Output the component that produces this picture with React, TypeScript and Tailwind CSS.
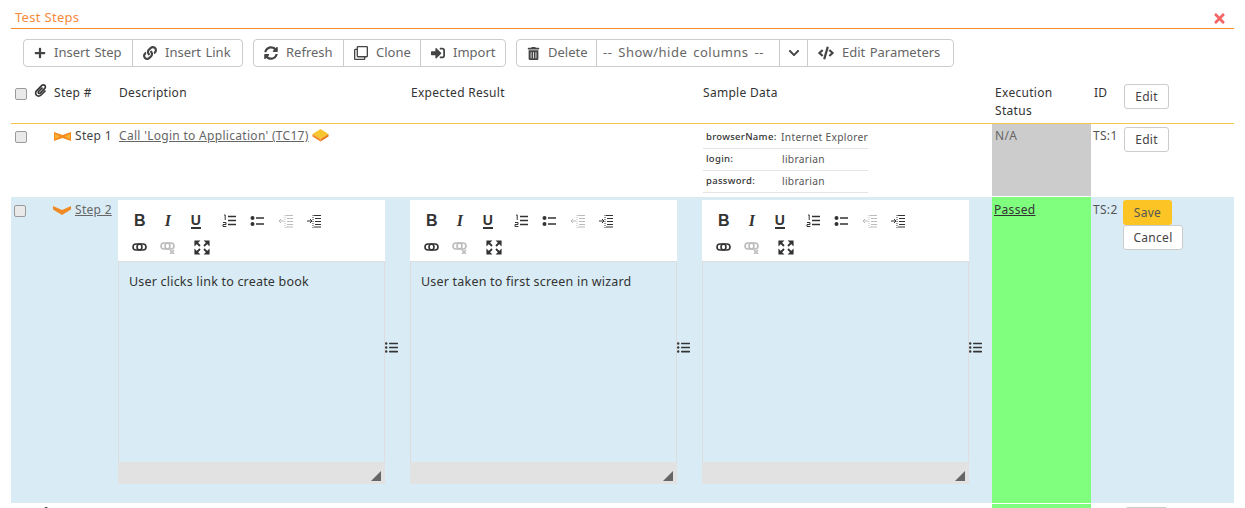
import React from "react";
import {
  FaPlus, FaLink, FaSyncAlt, FaRegClone, FaSignInAlt, FaTrashAlt, FaChevronDown, FaCode, FaPaperclip, FaListUl, FaTimes,
} from "react-icons/fa";

const font = "font-['Noto_Sans','Open_Sans',sans-serif]";

function Btn({ w, icon, label, text = "[word-spacing:1px]", center = false }: { w: string; icon?: React.ReactNode; label?: string; text?: string; center?: boolean }) {
  return (
    <div className={`${w} flex h-full items-center gap-[8px] whitespace-nowrap border-r border-[#ccc] last:border-r-0 text-[13px] text-[#666] ${center ? "justify-center" : "pl-[10px]"}`}>
      {icon}
      {label && <span className={text}>{label}</span>}
    </div>
  );
}

function Group({ children }: { children: React.ReactNode }) {
  return <div className="flex h-[28px] rounded-[4px] border border-[#ccc] bg-white">{children}</div>;
}

function Check() {
  return <div className="h-[12px] w-[12px] rounded-[2px] border border-[#9a9a9a] bg-[#e9e9e9]" />;
}

function PlainBtn({ label, w }: { label: string; w: string }) {
  return (
    <div className={`${w} flex h-[25px] items-center justify-center rounded-[3px] border border-[#ccc] bg-white text-[12px] tracking-[0.3px] text-[#444]`}>
      {label}
    </div>
  );
}

const Ic = ({ children, w = 16, h = 14 }: { children: React.ReactNode; w?: number; h?: number }) => (
  <svg width={w} height={h} viewBox={`0 0 ${w} ${h}`} className="block">{children}</svg>
);

function EditorToolbar() {
  const d = "#333";
  const l = "#bbb";
  const indent = (c: string, out: boolean) => (
    <Ic>
      <g stroke={c} strokeWidth="1" fill="none">
        <path d="M8 1.5H15M9 4.5H15M9 7.5H15M9 10.5H15M8 13H15" />
        <path d="M7 1V14" strokeDasharray="1 1" />
        {out ? <path d="M6 7H1M3 5L1 7L3 9" /> : <path d="M1 7H6M4 5L6 7L4 9" />}
      </g>
    </Ic>
  );
  const Cell = ({ children }: { children: React.ReactNode }) => (
    <div className="flex h-[26px] w-[28px] items-center justify-center">{children}</div>
  );
  return (
    <div className="h-[61px] bg-white pl-[8px] pt-[8px]">
      <div className="flex">
        <Cell>
          <span className="font-['Liberation_Sans',sans-serif] text-[16px] font-bold leading-none text-[#333]">B</span>
        </Cell>
        <Cell>
          <span className="font-['Liberation_Serif',serif] text-[16px] font-bold italic leading-none text-[#333]">I</span>
        </Cell>
        <Cell>
          <span className="border-b-2 border-[#333] font-['Liberation_Sans',sans-serif] text-[14px] font-bold leading-[13px] text-[#333]">U</span>
        </Cell>
        <div className="w-[6px]" />
        <Cell>
          <Ic>
            <path d="M6 2.5H14M6 6.5H14M6 10.5H14" stroke={d} strokeWidth="1.5" />
            <path d="M2 1H3.2V6" stroke={d} strokeWidth="1" fill="none" />
            <path d="M1 8.5H4V10.5H1V12.5H4.4" stroke={d} strokeWidth="1" fill="none" />
          </Ic>
        </Cell>
        <Cell>
          <Ic>
            <path d="M6 4H14M6 10H14" stroke={d} strokeWidth="1.6" />
            <circle cx="2.5" cy="4" r="2" fill={d} />
            <circle cx="2.5" cy="10" r="2" fill={d} />
          </Ic>
        </Cell>
        <Cell>{indent(l, true)}</Cell>
        <Cell>{indent(d, false)}</Cell>
      </div>
      <div className="flex">
        <Cell>
          <Ic>
            <g fill="none" stroke={d} strokeWidth="1.6">
              <rect x="1" y="4" width="9" height="6" rx="3" />
              <rect x="5" y="4" width="9" height="6" rx="3" />
            </g>
          </Ic>
        </Cell>
        <Cell>
          <Ic>
            <g fill="none" stroke={l} strokeWidth="1.6">
              <rect x="1" y="3" width="9" height="6" rx="3" />
              <rect x="5" y="3" width="9" height="6" rx="3" />
              <path d="M10 10L14 14M14 10L10 14" />
            </g>
          </Ic>
        </Cell>
        <div className="w-[6px]" />
        <Cell>
          <Ic h={15}>
            <g fill={d} stroke={d} strokeWidth="1.2">
              <path d="M1 1H5L1 5Z" />
              <path d="M15 1H11L15 5Z" />
              <path d="M1 14H5L1 10Z" />
              <path d="M15 14H11L15 10Z" />
              <path d="M3 3L6 6M13 3L10 6M3 12L6 9M13 12L10 9" fill="none" strokeWidth="1.8" />
            </g>
          </Ic>
        </Cell>
      </div>
    </div>
  );
}

function Editor({ text }: { text?: string }) {
  return (
    <div className="flex">
      <div className="mt-[3px] flex h-[284px] w-[267px] flex-col">
        <EditorToolbar />
        <div className="h-[201px] border-x border-t border-[#ddd] px-[10px] py-[11px] text-[12.5px] leading-[18px] tracking-[0.2px] text-[#333]">
          {text}
        </div>
        <div className="flex h-[22px] items-end justify-end bg-[#e2e2e2] pb-[3px] pr-[4px]">
          <div className="h-[10px] w-[10px] bg-[#666] [clip-path:polygon(100%_0,100%_100%,0_100%)]" />
        </div>
      </div>
      <div className="flex h-[300px] items-center text-[#333]">
        <FaListUl size={13} />
      </div>
    </div>
  );
}

const BowTie = () => (
  <svg width="17" height="9" viewBox="0 0 17 9" className="block">
    <path d="M0 0L8.5 3L17 0V9L8.5 6L0 9Z" fill="#f28c1e" />
    <path d="M1 2L6 4.5L1 7Z" fill="#f9b233" />
    <path d="M16 2L11 4.5L16 7Z" fill="#f9b233" />
  </svg>
);

const Chevron = () => (
  <svg width="18" height="9" viewBox="0 0 18 9" className="block">
    <path d="M0 0L9 4L18 0V3.5L9 9L0 3.5Z" fill="#f08a24" />
  </svg>
);

const Block = () => (
  <svg width="17" height="14" viewBox="0 0 17 14" className="mt-[1px] block">
    <path d="M8.5 1L16.5 6L8.5 11L0.5 6Z" fill="#f7c52d" />
    <path d="M0.5 6V8.5L8.5 13.5V11Z" fill="#f08a24" />
    <path d="M16.5 6V8.5L8.5 13.5V11Z" fill="#e9791a" />
  </svg>
);

function Param({ k, v }: { k: string; v: string }) {
  return (
    <div className="flex h-[22px] items-center whitespace-nowrap border-b border-[#e4e4e4] pb-[2px] pl-[3px]">
      <span className="w-[76px] text-[9.5px] font-medium text-[#333]">{k}</span>
      <span className="text-[10.2px] text-[#555]">{v}</span>
    </div>
  );
}

const cols = "grid-cols-[42px_65px_292px_292px_290px_99px_32px_111px]";

export default function App() {
  return (
    <div className={`${font} h-[508px] w-[1245px] overflow-hidden bg-white pl-[11px] pr-[11px] text-[#333]`}>
      <div className="flex h-[29px] items-end justify-between border-b border-[#f7892b] pb-[1px] pl-[4px] pr-[7px]">
        <span className="text-[13px] tracking-[0.3px] text-[#f7893b]">Test Steps</span>
        <FaTimes size={15} className="mb-[1px] text-[#f56565]" />
      </div>

      <div className="flex gap-[10px] pl-[12px] pt-[10px]">
        <Group>
          <Btn w="w-[109px]" icon={<FaPlus size={12} className="text-[#444]" />} label="Insert Step" />
          <Btn w="w-[109px]" icon={<FaLink size={14} className="text-[#444]" />} label="Insert Link" />
        </Group>
        <Group>
          <Btn w="w-[90px]" icon={<FaSyncAlt size={14} className="text-[#444]" />} label="Refresh" />
          <Btn w="w-[77px]" icon={<FaRegClone size={14} className="text-[#444]" />} label="Clone" />
          <Btn w="w-[84px]" icon={<FaSignInAlt size={14} className="text-[#444]" />} label="Import" />
        </Group>
        <Group>
          <Btn w="w-[80px]" icon={<FaTrashAlt size={13} className="text-[#444]" />} label="Delete" />
          <div className="flex h-full w-[183px] items-center whitespace-nowrap border-r border-[#ccc] pl-[6px] text-[13px] tracking-[0.5px] text-[#666] [word-spacing:2px]">
            -- Show/hide columns --
          </div>
          <Btn w="w-[28px]" center icon={<FaChevronDown size={12} className="text-[#444]" />} />
          <Btn w="w-[145px]" icon={<FaCode size={16} className="text-[#444]" />} label="Edit Parameters" />
        </Group>
      </div>

      <div className={`mt-[11px] grid h-[46px] ${cols} border-b border-[#f4c44e] text-[12px] leading-[18px] tracking-[0.3px] text-[#333]`}>
        <div className="flex items-start justify-between pl-[4px] pr-[6px] pt-[10px]">
          <Check />
          <FaPaperclip size={13} className="-mt-[4px] text-[#333]" />
        </div>
        <div className="pl-px pt-[6px]">Step #</div>
        <div className="pl-px pt-[6px]">Description</div>
        <div className="pl-px pt-[6px]">Expected Result</div>
        <div className="pl-px pt-[6px]">Sample Data</div>
        <div className="pl-[3px] pt-[6px]">Execution<br />Status</div>
        <div className="pl-[3px] pt-[6px]">ID</div>
        <div className="pl-px pt-[6px]"><PlainBtn label="Edit" w="w-[45px]" /></div>
      </div>

      <div className={`grid h-[73px] ${cols} border-b border-white text-[12px] leading-[18px] tracking-[0.3px]`}>
        <div className="pl-[4px] pt-[7px]"><Check /></div>
        <div className="flex gap-[4px] pl-px pt-[3px]">
          <div className="pt-[5px]"><BowTie /></div>
          <span className="text-[#444]">Step 1</span>
        </div>
        <div className="col-span-2 flex items-start gap-[3px] pl-px pt-[3px]">
          <span className="text-[#666] underline">Call 'Login to Application' (TC17)</span>
          <Block />
        </div>
        <div className="pl-px pt-[3px]">
          <div className="w-[165px]">
            <Param k="browserName:" v="Internet Explorer" />
            <Param k="login:" v="librarian" />
            <Param k="password:" v="librarian" />
          </div>
        </div>
        <div className="bg-[#cccccc] pl-[3px] pt-[3px] text-[#666]">N/A</div>
        <div className="pl-[2px] pt-[3px] text-[#555]">TS:1</div>
        <div className="pl-px pt-[3px]"><PlainBtn label="Edit" w="w-[45px]" /></div>
      </div>

      <div className={`grid h-[307px] ${cols} border-b border-white bg-[#d9ecf5] text-[12px] leading-[18px] tracking-[0.3px]`}>
        <div className="pl-[3px] pt-[8px]"><Check /></div>
        <div className="flex gap-[4px] pt-[4px]">
          <div className="pt-[5px]"><Chevron /></div>
          <span className="text-[#666] underline">Step 2</span>
        </div>
        <Editor text="User clicks link to create book" />
        <Editor text="User taken to first screen in wizard" />
        <Editor />
        <div className="bg-[#80ff7f] pl-[2px] pt-[4px] text-[#333] underline">Passed</div>
        <div className="pl-[2px] pt-[4px] text-[#555]">TS:2</div>
        <div className="pt-[3px]">
          <div className="flex h-[25px] w-[49px] items-center justify-center rounded-[3px] bg-[#fcc525] text-[#555]">Save</div>
          <PlainBtn label="Cancel" w="w-[60px]" />
        </div>
      </div>

      <div className={`grid h-[10px] ${cols}`}>
        <div className="relative col-span-5">
          <FaPaperclip size={10} className="absolute left-[28px] top-[3px] text-[#333]" />
        </div>
        <div className="bg-[#80ff7f]" />
        <div />
        <div className="pl-[2px] pt-[3px]"><div className="h-[20px] w-[43px] rounded-[3px] border border-[#ccc]" /></div>
      </div>
    </div>
  );
}
